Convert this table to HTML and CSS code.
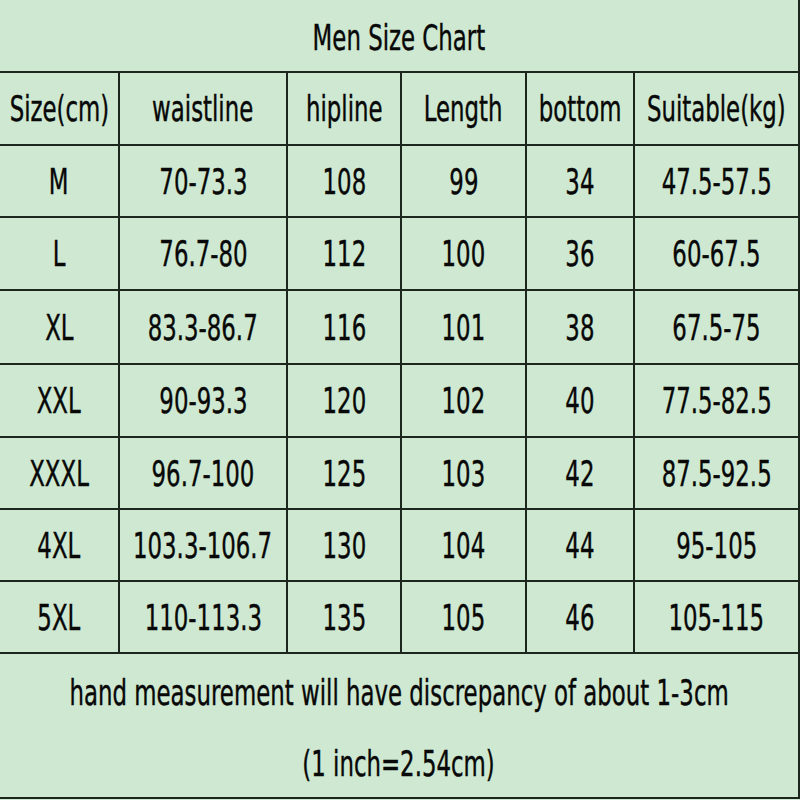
FILE: index.html
```html
<!DOCTYPE html>
<html>
<head>
<meta charset="utf-8">
<link rel="stylesheet" href="styles.css">
</head>
<body>
<div class="chart">
  <div class="cell title span6"><span>Men Size Chart</span></div>

  <div class="cell"><span>Size(cm)</span></div>
  <div class="cell"><span>waistline</span></div>
  <div class="cell"><span>hipline</span></div>
  <div class="cell"><span>Length</span></div>
  <div class="cell"><span>bottom</span></div>
  <div class="cell"><span>Suitable(kg)</span></div>

  <div class="cell"><span>M</span></div>
  <div class="cell"><span>70-73.3</span></div>
  <div class="cell"><span>108</span></div>
  <div class="cell"><span>99</span></div>
  <div class="cell"><span>34</span></div>
  <div class="cell"><span>47.5-57.5</span></div>

  <div class="cell"><span>L</span></div>
  <div class="cell"><span>76.7-80</span></div>
  <div class="cell"><span>112</span></div>
  <div class="cell"><span>100</span></div>
  <div class="cell"><span>36</span></div>
  <div class="cell"><span>60-67.5</span></div>

  <div class="cell"><span>XL</span></div>
  <div class="cell"><span>83.3-86.7</span></div>
  <div class="cell"><span>116</span></div>
  <div class="cell"><span>101</span></div>
  <div class="cell"><span>38</span></div>
  <div class="cell"><span>67.5-75</span></div>

  <div class="cell"><span>XXL</span></div>
  <div class="cell"><span>90-93.3</span></div>
  <div class="cell"><span>120</span></div>
  <div class="cell"><span>102</span></div>
  <div class="cell"><span>40</span></div>
  <div class="cell"><span>77.5-82.5</span></div>

  <div class="cell"><span>XXXL</span></div>
  <div class="cell"><span>96.7-100</span></div>
  <div class="cell"><span>125</span></div>
  <div class="cell"><span>103</span></div>
  <div class="cell"><span>42</span></div>
  <div class="cell"><span>87.5-92.5</span></div>

  <div class="cell"><span>4XL</span></div>
  <div class="cell"><span>103.3-106.7</span></div>
  <div class="cell"><span>130</span></div>
  <div class="cell"><span>104</span></div>
  <div class="cell"><span>44</span></div>
  <div class="cell"><span>95-105</span></div>

  <div class="cell"><span>5XL</span></div>
  <div class="cell"><span>110-113.3</span></div>
  <div class="cell"><span>135</span></div>
  <div class="cell"><span>105</span></div>
  <div class="cell"><span>46</span></div>
  <div class="cell"><span>105-115</span></div>

  <div class="cell note span6"><span>hand measurement will have discrepancy of about 1-3cm</span></div>
  <div class="cell note last span6"><span>(1 inch=2.54cm)</span></div>
</div>
</body>
</html>
```
FILE: styles.css
```css
html, body {
  margin: 0;
  padding: 0;
  background: #cee8d1;
}
.chart {
  width: 800px;
  height: 800px;
  display: grid;
  grid-template-columns: 120px 168px 114px 125px 108px 165px;
  grid-template-rows: 73px 73px 72px 73px 74px 73px 72px 72px 72px 72px 73px;
  background: #cee8d1;
  font-family: "DejaVu Sans", "Verdana", sans-serif;
  font-size: 36px;
  color: #080808;
  overflow: hidden;
}
.cell {
  box-sizing: border-box;
  display: flex;
  align-items: center;
  justify-content: center;
  border-right: 2px solid #1c261c;
  border-bottom: 2px solid #1c261c;
  min-width: 0;
  white-space: nowrap;
}
.cell span {
  flex: none;
  display: inline-block;
  transform: scaleX(0.635);
  transform-origin: center;
  -webkit-text-stroke: 0.45px #080808;
}
.title span,
.note span {
  transform: translateY(2px) scaleX(0.635);
}
.span6 {
  grid-column: 1 / span 6;
}
.note {
  border-bottom: none;
}
.note.last {
  border-bottom: 2px solid #1c261c;
}
```
